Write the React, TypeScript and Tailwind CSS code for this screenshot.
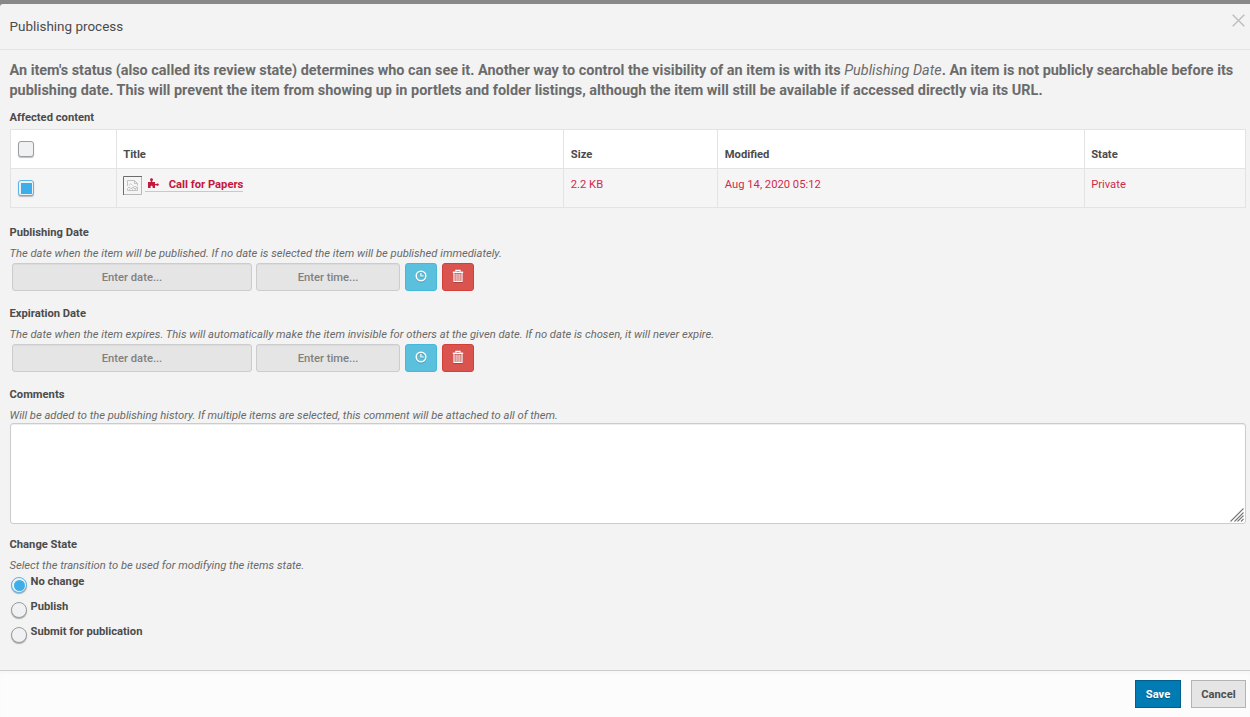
import React from 'react';

function ClockIcon() {
  return (
    <svg width="12" height="12" viewBox="0 0 12 12" fill="none" stroke="#fff" className="mb-[2px] drop-shadow-[0_1px_0_rgba(0,0,0,0.2)]">
      <circle cx="6" cy="6" r="4.8" strokeWidth="1.5" />
      <path d="M5.9 2.8V6H8.6" strokeWidth="1.2" />
    </svg>
  );
}

function TrashIcon() {
  return (
    <svg width="12" height="14" viewBox="0 0 12 14" fill="none" stroke="#fff" className="mb-[2px] drop-shadow-[0_1px_0_rgba(0,0,0,0.2)]">
      <path d="M0.8 3.3H11.2" strokeWidth="1.4" />
      <path d="M3.9 2.8V1.4H8.1V2.8M2 3.4V12.5H10V3.4" strokeWidth="1.2" />
      <path d="M4.1 4.5V12M6 4.5V12M7.9 4.5V12" strokeWidth="1" />
    </svg>
  );
}

function PuzzleIcon() {
  return (
    <svg width="12" height="11" viewBox="0 0 12 11" fill="#c4183c">
      <path d="M1 4H3.8V2.9L3.1 2.2V1L3.9 0.3H5L5.9 1V2.2L5.2 2.9V4H8V6.1H9.4L10.1 5.5H11L11.8 6.2V7.1L11 7.8H10.1L9.4 7.2H8V10H5.6V8.4L5.1 7.7H4.1L3.6 8.4V10H1Z" />
    </svg>
  );
}

function BrokenImageIcon() {
  return (
    <svg width="19" height="19" viewBox="0 0 19 19" fill="none" className="block">
      <path d="M0.5 19V0.5H19" stroke="#6c6c6c" />
      <path d="M18.5 1V18.5H1" stroke="#b8b8b8" />
      <path d="M4.5 10V4.5H11.5L14.5 7.5V9.5M11.5 4.5V7.5H14.5" stroke="#c2c2c2" />
      <path d="M6 9.5L7.5 7.5L9.5 9.5M10.5 10.5H13.5" stroke="#cdcdcd" />
      <path d="M4.5 14.5V12.5L6 11L8 12.8L10 11.2L12 12.8L14.5 11V14.5Z" stroke="#c2c2c2" />
      <path d="M6 14L7.5 12.5M9 14L10.5 12.5M12 14L13.5 12.5" stroke="#cdcdcd" />
    </svg>
  );
}

function Checkbox({ checked = false }: { checked?: boolean }) {
  return (
    <span
      role="checkbox"
      aria-checked={checked}
      className={
        checked
          ? 'flex size-4 items-center justify-center rounded-[3px] border border-[#5ab5e8] bg-[#f0f1f3] shadow-[0_1px_1px_rgba(0,0,0,0.25)]'
          : 'flex size-4 items-center justify-center rounded-[3px] border border-[#9c9da1] bg-[#f0f1f3] shadow-[0_1px_1px_rgba(0,0,0,0.25)]'
      }
    >
      {checked && <span className="size-[11px] bg-[#3daee9]" />}
    </span>
  );
}

function Radio({ label, checked = false }: { label: string; checked?: boolean }) {
  return (
    <label className="flex h-[25px]">
      <span
        className={
          checked
            ? 'mt-[3px] ml-[1.5px] flex size-4 items-center justify-center rounded-full border border-[#5ab5e8] bg-[#f0f1f3] shadow-[0_1px_1px_rgba(0,0,0,0.3)]'
            : 'mt-[3px] ml-[1.5px] flex size-4 items-center justify-center rounded-full border border-[#9c9da1] bg-[#f0f1f3] shadow-[0_1px_1px_rgba(0,0,0,0.3)]'
        }
      >
        {checked && <span className="size-[11px] rounded-full bg-[#3daee9]" />}
      </span>
      <span className="ml-[3.5px] h-4 leading-4 font-bold">{label}</span>
    </label>
  );
}

function DateField({ label, help }: { label: string; help: string }) {
  return (
    <section className="h-[81px]">
      <h2 className="font-bold leading-4">{label}</h2>
      <p className="mt-[5px] leading-4 text-[#696969] italic">{help}</p>
      <div className="mt-px ml-[2.5px] flex h-7 font-medium text-[#808080]">
        <div className="flex w-60 items-center justify-center rounded-[3px] border border-[#ccc] bg-[#e5e5e5] pt-px leading-4 shadow-[inset_0_1px_1px_rgba(0,0,0,0.04)]">Enter date...</div>
        <div className="ml-1 flex w-36 items-center justify-center rounded-[3px] border border-[#ccc] bg-[#e5e5e5] pt-px leading-4 shadow-[inset_0_1px_1px_rgba(0,0,0,0.04)]">Enter time...</div>
        <button aria-label="Now" className="ml-[5px] flex w-8 items-center justify-center rounded-[3px] border border-[#46b8da] bg-[#5bc0de]">
          <ClockIcon />
        </button>
        <button aria-label="Clear" className="ml-[5px] flex w-8 items-center justify-center rounded-[3px] border border-[#d43f3a] bg-[#d9534f]">
          <TrashIcon />
        </button>
      </div>
    </section>
  );
}

export default function App() {
  return (
    <div className="flex h-[717px] w-[1250px] flex-col overflow-hidden bg-[#888] pt-1 font-['Roboto',sans-serif] text-[11.21px] text-[#4b4b4b]">
      <div className="flex min-h-0 flex-1 flex-col rounded-tl-[3px] bg-[#f3f3f3]">
        <header className="flex h-[46px] items-start justify-between border-b border-[#e3e3e3] pl-[9.5px]">
          <h1 className="mt-[13px] text-[13.46px] leading-5">Publishing process</h1>
          <svg width="13" height="13" viewBox="0 0 13 13" className="mt-[10px] mr-[5px]" stroke="#bdbdbd" strokeWidth="1.4">
            <path d="M0.7 0.7L12.3 12.3M12.3 0.7L0.7 12.3" />
          </svg>
        </header>
        <main className="flex-1 pr-1 pl-[9.5px]">
          <p className="mt-[11px] text-[14.43px] leading-5 font-bold text-[#6b6b6b]">
            <span className="block whitespace-nowrap">
              An item's status (also called its review state) determines who can see it. Another way to control the visibility of an item is with its{' '}
              <em className="font-normal">Publishing Date</em>. An item is not publicly searchable before its
            </span>
            <span className="block whitespace-nowrap">publishing date. This will prevent the item from showing up in portlets and folder listings, although the item will still be available if accessed directly via its URL.</span>
          </p>
          <h2 className="mt-[9px] leading-4 font-bold">Affected content</h2>
          <div className="mt-[3px] ml-[0.5px] w-[1236px] border border-[#e3e3e3]">
            <div className="grid h-[39px] grid-cols-[106px_447px_154px_367px_160px] divide-x divide-[#e3e3e3] border-b border-[#e3e3e3] bg-white font-bold">
              <div className="pt-[11px] pl-[7px]"><Checkbox /></div>
              <div className="pt-[17px] pl-[6.2px] leading-4">Title</div>
              <div className="pt-[17px] pl-[6.8px] leading-4">Size</div>
              <div className="pt-[17px] pl-[6.8px] leading-4">Modified</div>
              <div className="pt-[17px] pl-[6.2px] leading-4">State</div>
            </div>
            <div className="grid h-[38px] grid-cols-[106px_447px_154px_367px_160px] divide-x divide-[#e3e3e3] bg-[#f5f5f5] text-[#cf2b4d]">
              <div className="pt-[11px] pl-[7px]"><Checkbox checked /></div>
              <div className="flex items-start pt-[7px] pl-[6px]">
                <BrokenImageIcon />
                <a className="ml-[3px] flex h-4 items-start border-b border-[#c9c9c9] font-bold text-[#c4183c]">
                  <span className="mt-[2px] ml-[2px]"><PuzzleIcon /></span>
                  <span className="mt-px ml-[9.7px] leading-4">Call for Papers</span>
                </a>
              </div>
              <div className="pt-2 pl-[6.8px] leading-4">2.2 KB</div>
              <div className="pt-2 pl-[6.8px] leading-4">Aug 14, 2020 05:12</div>
              <div className="pt-2 pl-[6.2px] leading-4">Private</div>
            </div>
          </div>
          <div className="mt-[17px]">
            <DateField label="Publishing Date" help="The date when the item will be published. If no date is selected the item will be published immediately." />
            <DateField label="Expiration Date" help="The date when the item expires. This will automatically make the item invisible for others at the given date. If no date is chosen, it will never expire." />
          </div>
          <section>
            <h2 className="leading-4 font-bold">Comments</h2>
            <p className="mt-[5px] leading-4 text-[#696969] italic">Will be added to the publishing history. If multiple items are selected, this comment will be attached to all of them.</p>
            <div className="-mt-px ml-[0.5px] flex h-[101px] w-[1236px] items-end justify-end rounded-[3px] border border-[#ccc] bg-white pr-px pb-px shadow-[inset_0_1px_1px_rgba(0,0,0,0.075)]">
              <svg width="14" height="14" viewBox="0 0 14 14" stroke="#777" strokeWidth="1.1">
                <path d="M0.5 13.5L13.5 0.5M4.5 13.5L13.5 4.5M7.5 13.5L13.5 7.5M11 13.5L13.5 11" />
              </svg>
            </div>
          </section>
          <section className="mt-[13px]">
            <h2 className="leading-4 font-bold">Change State</h2>
            <p className="mt-[5px] leading-4 text-[#696969] italic">Select the transition to be used for modifying the items state.</p>
            <Radio label="No change" checked />
            <Radio label="Publish" />
            <Radio label="Submit for publication" />
          </section>
        </main>
        <footer className="flex h-[47px] items-start justify-end gap-[10px] border-t border-[#ccc] bg-[#fcfcfc] pt-[9px] pr-1 font-bold shadow-[inset_0_3px_3px_rgba(0,0,0,0.02)]">
          <button className="h-7 w-[46px] border border-[#005f8b] bg-[#007bb3] pt-[2px] leading-4 text-white [text-shadow:0_1px_1px_rgba(0,0,0,0.3)]">Save</button>
          <button className="h-7 w-[55px] border border-[#b3b3b3] bg-[#e5e5e5] pt-[2px] leading-4 text-[#4f4f4f]">Cancel</button>
        </footer>
      </div>
    </div>
  );
}
